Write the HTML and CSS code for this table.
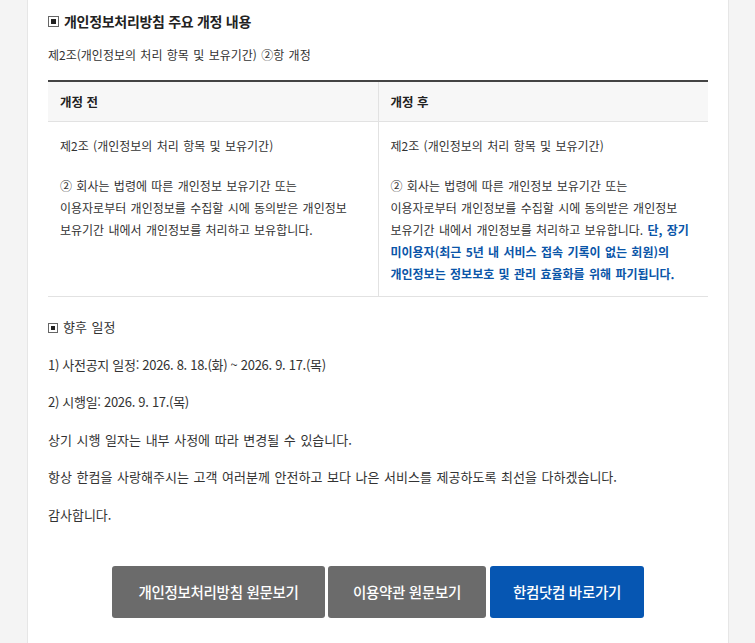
FILE: index.html
```html
<!DOCTYPE html>
<html lang="ko">
<head>
<meta charset="utf-8">
<link rel="stylesheet" href="styles.css">
</head>
<body>
<div class="card">
  <h2 class="title"><span class="sq"></span>개인정보처리방침 주요 개정 내용</h2>
  <p class="sub">제2조(개인정보의 처리 항목 및 보유기간) ②항 개정</p>
  <table class="cmp">
    <thead>
      <tr><th>개정 전</th><th class="right">개정 후</th></tr>
    </thead>
    <tbody>
      <tr>
        <td>
          <p>제2조 (개인정보의 처리 항목 및 보유기간)</p>
          <p class="gap">② 회사는 법령에 따른 개인정보 보유기간 또는<br>이용자로부터 개인정보를 수집할 시에 동의받은 개인정보<br>보유기간 내에서 개인정보를 처리하고 보유합니다.</p>
        </td>
        <td class="right">
          <p>제2조 (개인정보의 처리 항목 및 보유기간)</p>
          <p class="gap">② 회사는 법령에 따른 개인정보 보유기간 또는<br>이용자로부터 개인정보를 수집할 시에 동의받은 개인정보<br>보유기간 내에서 개인정보를 처리하고 보유합니다. <strong class="hl">단, 장기<br>미이용자(최근 5년 내 서비스 접속 기록이 없는 회원)의<br>개인정보는 정보보호 및 관리 효율화를 위해 파기됩니다.</strong></p>
        </td>
      </tr>
    </tbody>
  </table>
  <div class="notes">
    <p><span class="sq small"></span>향후 일정</p>
    <p class="num">1) 사전공지 일정: 2026. 8. 18.(화) ~ 2026. 9. 17.(목)</p>
    <p class="num">2) 시행일: 2026. 9. 17.(목)</p>
    <p>상기 시행 일자는 내부 사정에 따라 변경될 수 있습니다.</p>
    <p>항상 한컴을 사랑해주시는 고객 여러분께 안전하고 보다 나은 서비스를 제공하도록 최선을 다하겠습니다.</p>
    <p>감사합니다.</p>
  </div>
  <div class="btns">
    <a class="btn b1" href="#">개인정보처리방침 원문보기</a>
    <a class="btn b2" href="#">이용약관 원문보기</a>
    <a class="btn blue" href="#">한컴닷컴 바로가기</a>
  </div>
</div>
</body>
</html>
```

FILE: styles.css
```css
html, body {
  margin: 0;
  padding: 0;
  background: #f4f4f4;
  height: 100%;
}
body {
  font-family: "Noto Sans CJK KR", "Noto Sans", sans-serif;
  color: #333;
  font-size: 13px;
  overflow: hidden;
}
.card {
  box-sizing: border-box;
  margin-left: 27px;
  width: 702px;
  min-height: 100%;
  background: #fff;
  border-left: 1px solid #e6e6e6;
  border-right: 1px solid #e6e6e6;
  padding: 11px 20px 40px;
}
.title {
  margin: 0;
  font-size: 14px;
  line-height: 20px;
  font-weight: 700;
  color: #222;
  letter-spacing: -0.3px;
  display: flex;
  align-items: center;
}
.sq {
  box-sizing: border-box;
  display: inline-block;
  width: 11px;
  height: 11px;
  border: 1px solid #666;
  margin-right: 5px;
  position: relative;
  flex: none;
}
.sq::after {
  content: "";
  position: absolute;
  left: 2px;
  top: 2px;
  width: 5px;
  height: 5px;
  background: #222;
}
.sq.small {
  width: 10px;
  height: 10px;
  vertical-align: -1px;
}
.sq.small::after {
  width: 4px;
  height: 4px;
}
.sub {
  margin: 14px 0 0;
  line-height: 20px;
  font-size: 12px;
  word-spacing: 1px;
}
.cmp {
  width: 100%;
  margin-top: 15px;
  border-collapse: collapse;
  table-layout: fixed;
  border-top: 2px solid #444;
}
.cmp th {
  height: 39px;
  padding: 0 12px;
  background: #f7f7f7;
  text-align: left;
  font-weight: 700;
  font-size: 12.5px;
  color: #222;
  border-bottom: 1px solid #e2e2e2;
}
.cmp td {
  vertical-align: top;
  padding: 13px 12px 11px;
  line-height: 22px;
  font-size: 12px;
  word-spacing: 1px;
  border-bottom: 1px solid #e2e2e2;
}
.cmp .right {
  border-left: 1px solid #e2e2e2;
}
.cmp p {
  margin: 0;
}
.cmp p.gap {
  margin-top: 18px;
}
.hl {
  color: #0a55a8;
  font-weight: 700;
}
.notes {
  margin-top: 19px;
}
.notes p {
  margin: 15.6px 0 0;
  line-height: 22px;
  word-spacing: 1px;
}
.notes p.num {
  word-spacing: 0;
  letter-spacing: -0.3px;
}
.notes p:first-child {
  margin-top: 0;
}
.btns {
  display: flex;
  justify-content: center;
  gap: 3px;
  margin-top: 40px;
}
.btn {
  display: flex;
  align-items: center;
  justify-content: center;
  height: 52px;
  background: #6b6b6b;
  color: #fff;
  text-decoration: none;
  font-size: 14.5px;
  font-weight: 500;
  border-radius: 3px;
  letter-spacing: -0.3px;
}
.b1 { width: 213px; }
.b2 { width: 158px; }
.btn.blue {
  width: 154px;
  background: #0656b2;
  margin-left: 1px;
}
```
